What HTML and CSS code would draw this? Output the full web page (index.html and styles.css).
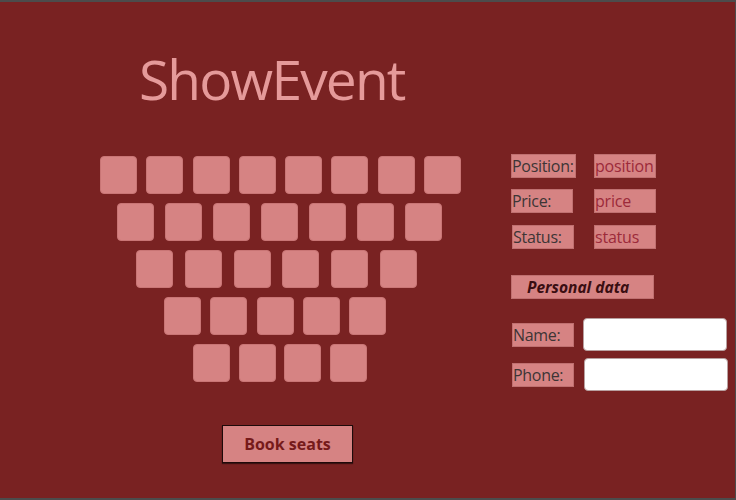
FILE: index.html
```html
<!DOCTYPE html>
<html>
<head>
<meta charset="utf-8">
<link rel="stylesheet" href="styles.css">
</head>
<body>
<div class="app">
  <div class="left">
    <h1 class="title">ShowEvent</h1>
    <div class="seats">
      <div class="row row1">
        <div class="seat"></div><div class="seat"></div><div class="seat"></div><div class="seat"></div>
        <div class="seat"></div><div class="seat"></div><div class="seat"></div><div class="seat"></div>
      </div>
      <div class="row row2">
        <div class="seat"></div><div class="seat"></div><div class="seat"></div><div class="seat"></div>
        <div class="seat"></div><div class="seat"></div><div class="seat"></div>
      </div>
      <div class="row row3">
        <div class="seat"></div><div class="seat"></div><div class="seat"></div>
        <div class="seat"></div><div class="seat"></div><div class="seat"></div>
      </div>
      <div class="row row4">
        <div class="seat"></div><div class="seat"></div><div class="seat"></div>
        <div class="seat"></div><div class="seat"></div>
      </div>
      <div class="row row5">
        <div class="seat"></div><div class="seat"></div><div class="seat"></div><div class="seat"></div>
      </div>
    </div>
    <button class="book">Book seats</button>
  </div>
  <div class="right">
    <div class="info">
      <div class="info-row">
        <span class="label w65">Position:</span>
        <span class="value">position</span>
      </div>
      <div class="info-row">
        <span class="label w62">Price:</span>
        <span class="value">price</span>
      </div>
      <div class="info-row status">
        <span class="label w62">Status:</span>
        <span class="value">status</span>
      </div>
    </div>
    <div class="section">Personal data</div>
    <div class="form-row name-row">
      <span class="label w62">Name:</span>
      <input class="field" type="text">
    </div>
    <div class="form-row phone-row">
      <span class="label w62">Phone:</span>
      <input class="field" type="text">
    </div>
  </div>
</div>
</body>
</html>
```

FILE: styles.css
```css
html, body {
  margin: 0;
  padding: 0;
  background: #4c4c4c;
}

body {
  width: 736px;
  height: 500px;
  overflow: hidden;
  font-family: "Open Sans", "Noto Sans", sans-serif;
}

.app {
  margin-top: 2px;
  width: 735px;
  height: 496px;
  background: #792222;
  display: flex;
}

.left {
  width: 511px;
  display: flex;
  flex-direction: column;
  align-items: flex-start;
}

.title {
  margin: 49px 0 0 139px;
  font-size: 55px;
  line-height: 56px;
  height: 56px;
  font-weight: 400;
  color: #e59a9a;
  letter-spacing: -1.8px;
}

.seats {
  margin-top: 49px;
  display: flex;
  flex-direction: column;
  gap: 9px;
}

.row {
  display: flex;
}

.row1 { margin-left: 100px; gap: 9.3px; }
.row2 { margin-left: 117px; gap: 11px; }
.row3 { margin-left: 136px; gap: 11.8px; }
.row4 { margin-left: 164px; gap: 9.3px; }
.row5 { margin-left: 193px; gap: 8.7px; }

.seat {
  box-sizing: border-box;
  width: 37px;
  height: 38px;
  border-radius: 4px;
  background: #d68383;
  border: 1px solid #c97575;
}

.book {
  margin: 43px 0 0 222px;
  box-sizing: border-box;
  width: 131px;
  height: 38px;
  background: #d68383;
  border: 1px solid #1e0a0a;
  box-shadow: 0 1px 1px rgba(0, 0, 0, 0.5);
  color: #761a1a;
  font-family: "Open Sans", sans-serif;
  font-weight: 700;
  font-size: 16px;
  padding: 0;
}

.right {
  padding-top: 152px;
  display: flex;
  flex-direction: column;
}

.info {
  display: flex;
  flex-direction: column;
  gap: 11px;
}

.info-row {
  display: flex;
  gap: 18px;
}

.info-row .w62 { margin-right: 3px; }
.status { margin-top: 1px; }
.status .label { margin-left: 1px; margin-right: 2px; }

.label, .value {
  box-sizing: border-box;
  height: 24px;
  line-height: 22px;
  background: #d68383;
  border: 1px solid #c07070;
  font-size: 16px;
  white-space: nowrap;
  overflow: hidden;
}

.label {
  color: #3d3535;
  letter-spacing: -0.3px;
}

.w65 { width: 65px; }
.w62 { width: 62px; }

.value {
  width: 62px;
  color: #9c2a3a;
  letter-spacing: -0.2px;
}

.section {
  margin-top: 26px;
  box-sizing: border-box;
  width: 143px;
  height: 24px;
  line-height: 22px;
  background: #d68383;
  border: 1px solid #c07070;
  color: #3a0e12;
  font-weight: 700;
  font-style: italic;
  font-size: 15.5px;
  padding-left: 15px;
}

.form-row {
  display: flex;
  align-items: center;
  gap: 9px;
  margin-left: 1px;
}

.name-row { margin-top: 19px; }
.phone-row { margin-top: 7px; }
.phone-row .field { margin-left: 1px; }

.field {
  box-sizing: border-box;
  width: 144px;
  height: 33px;
  margin: 0;
  background: #ffffff;
  border: 1px solid #b8a0a0;
  border-radius: 4px;
  padding: 0;
}
```
